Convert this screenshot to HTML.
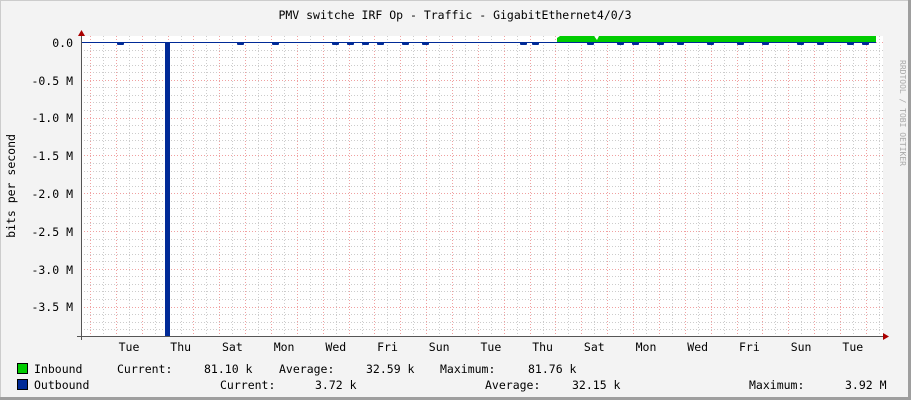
<!DOCTYPE html>
<html><head><style>
html,body{margin:0;padding:0;background:#f3f3f3}
svg{display:block}
text{font-family:"DejaVu Sans Mono","Liberation Mono",monospace;font-size:11.5px;fill:#000}
</style></head><body>
<svg width="911" height="400" xmlns="http://www.w3.org/2000/svg">
<rect x="0" y="0" width="911" height="400" fill="#f3f3f3"/>
<rect x="0" y="0" width="911" height="1" fill="#ccc"/>
<rect x="0" y="0" width="1" height="400" fill="#ccc"/>
<rect x="908" y="0" width="3" height="400" fill="#9e9e9e"/>
<rect x="0" y="397" width="911" height="3" fill="#9e9e9e"/>
<rect x="81" y="36" width="802" height="300" fill="#fff"/>
<g id="grid"></g>
<text x="455" y="19" text-anchor="middle">PMV switche IRF Op - Traffic - GigabitEthernet4/0/3</text>
<g text-anchor="end">
<text x="73" y="47">0.0</text>
<text x="73" y="85">-0.5 M</text>
<text x="73" y="122">-1.0 M</text>
<text x="73" y="160">-1.5 M</text>
<text x="73" y="198">-2.0 M</text>
<text x="73" y="236">-2.5 M</text>
<text x="73" y="274">-3.0 M</text>
<text x="73" y="311">-3.5 M</text>
</g>
<text transform="translate(15,186) rotate(-90)" text-anchor="middle">bits per second</text>
<text transform="translate(900,60) rotate(90)" style="font-size:8px;fill:#aaa">RRDTOOL / TOBI OETIKER</text>
<g text-anchor="middle" id="xl"></g>
<polygon points="557,42 557,38 560,36 594,36 597,40 599,36 876,36 876,42" fill="#00cc00"/>
<rect x="165" y="42" width="5" height="294" fill="#002a97"/>
<line x1="81" y1="42.5" x2="876" y2="42.5" stroke="#002a97" stroke-width="1"/>
<g fill="#002a97" id="dips"></g>
<line x1="81.5" y1="34" x2="81.5" y2="340" stroke="#555"/>
<line x1="77" y1="336.5" x2="886" y2="336.5" stroke="#555"/>
<polygon points="78,36 85,36 81.5,30" fill="#a00"/>
<polygon points="883,333 883,340 889,336.5" fill="#a00"/>
<rect x="17.5" y="363.5" width="10" height="10" fill="#00cc00" stroke="#000"/>
<rect x="17.5" y="379.5" width="10" height="10" fill="#002a97" stroke="#000"/>
<text x="34" y="373">Inbound</text>
<text x="117" y="373">Current:</text>
<text x="204" y="373">81.10 k</text>
<text x="279" y="373">Average:</text>
<text x="366" y="373">32.59 k</text>
<text x="440" y="373">Maximum:</text>
<text x="528" y="373">81.76 k</text>
<text x="34" y="389">Outbound</text>
<text x="220" y="389">Current:</text>
<text x="315" y="389">3.72 k</text>
<text x="485" y="389">Average:</text>
<text x="572" y="389">32.15 k</text>
<text x="749" y="389">Maximum:</text>
<text x="845" y="389">3.92 M</text>
</svg>
<script>
var g=document.getElementById("grid"),s="";
for(var y=42;y<336;y+=7.56){var maj=Math.abs(((y-42)/37.8)-Math.round((y-42)/37.8))<0.05;
s+='<line x1="81" x2="883" y1="'+(Math.round(y)+.5)+'" y2="'+(Math.round(y)+.5)+'" stroke="'+(maj?'#f0a0a0':'#ccc')+'" stroke-dasharray="1,2"/>';}
for(var i=0;i<64;i++){var x=90+12.93*i;if(x>883)break;var maj=i%2==0;
s+='<line y1="36" y2="336" x1="'+(Math.round(x)+.5)+'" x2="'+(Math.round(x)+.5)+'" stroke="'+(maj?'#f0a0a0':'#ccc')+'" stroke-dasharray="1,2"/>';}
g.innerHTML=s;
var L=["Tue","Thu","Sat","Mon","Wed","Fri","Sun","Tue","Thu","Sat","Mon","Wed","Fri","Sun","Tue"],t="";
for(var i=0;i<L.length;i++)t+='<text x="'+(129+51.7*i)+'" y="351">'+L[i]+'</text>';
document.getElementById("xl").innerHTML=t;
var d=[120,240,275,335,350,365,380,405,425,523,535,590,620,635,660,680,710,740,765,800,820,850,865],h="";
d.forEach(function(x){h+='<rect x="'+(x-3)+'" y="42" width="7" height="3" rx="1"/>';});
document.getElementById("dips").innerHTML=h;
</script>
</body></html>
